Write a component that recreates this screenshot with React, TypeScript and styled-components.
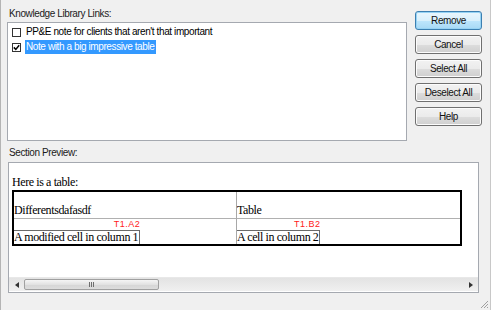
import React from "react";
import styled, { createGlobalStyle } from "styled-components";

const GlobalStyle = createGlobalStyle`
  html, body {
    margin: 0;
    padding: 0;
    background: #f0f0f0;
  }
`;

const uiFont = `"Liberation Sans", "Noto Sans", Arial, sans-serif`;
const docFont = `"Liberation Serif", "Times New Roman", serif`;

const Window = styled.div`
  width: 491px;
  height: 310px;
  box-sizing: border-box;
  background: #f0f0f0;
  border-left: 1px solid #b4b4b4;
  border-right: 1px solid #c8c8c8;
  padding: 6px 8px 0 6px;
  display: flex;
  flex-direction: column;
  position: relative;
  font-family: ${uiFont};
  font-size: 10px;
  letter-spacing: -0.4px;
  color: #000;
`;

const TopRow = styled.div`
  display: flex;
  gap: 8px;
`;

const ListColumn = styled.div`
  display: flex;
  flex-direction: column;
  width: 400px;
`;

const Label = styled.div`
  height: 16px;
  line-height: 16px;
  padding-left: 2px;
  color: #1a1a1a;
`;

const ListBox = styled.div`
  height: 119px;
  box-sizing: border-box;
  background: #fff;
  border: 1px solid #a5a9b0;
  padding: 2px 4px;
  display: flex;
  flex-direction: column;
  gap: 1px;
`;

const Item = styled.label`
  display: flex;
  align-items: center;
  gap: 3px;
  height: 14px;
`;

const Box = styled.span`
  width: 9px;
  height: 9px;
  box-sizing: border-box;
  border: 1px solid #333;
  background: #fff;
  display: flex;
  align-items: center;
  justify-content: center;
  margin-right: 1px;
`;

const ItemText = styled.span<{ $selected?: boolean }>`
  padding: 0 2px 0 1px;
  line-height: 14px;
  background: ${(p) => (p.$selected ? "#3399ff" : "transparent")};
  color: ${(p) => (p.$selected ? "#fff" : "#000")};
`;

const Buttons = styled.div`
  display: flex;
  flex-direction: column;
  gap: 5px;
  padding-top: 5px;
  width: 67px;
`;

const Button = styled.button<{ $primary?: boolean }>`
  height: 19px;
  padding: 0;
  border-radius: 3px;
  font-family: ${uiFont};
  font-size: 10px;
  letter-spacing: -0.4px;
  color: #111;
  border: 1px solid ${(p) => (p.$primary ? "#3c7fb1" : "#707070")};
  background: ${(p) =>
    p.$primary
      ? "linear-gradient(#eaf6fd 0%, #d9f0fc 50%, #bee6fd 51%, #a7d9f5 100%)"
      : "linear-gradient(#f2f2f2 0%, #ebebeb 50%, #dddddd 51%, #cfcfcf 100%)"};
  box-shadow: inset 0 0 0 1px ${(p) => (p.$primary ? "#97d3f4" : "#fcfcfc")};
`;

const PreviewLabel = styled(Label)`
  margin-top: 4px;
  margin-bottom: 1px;
`;

const Preview = styled.div`
  width: 471px;
  height: 131px;
  box-sizing: border-box;
  margin-left: 1px;
  background: #fff;
  border: 1px solid #a5a9b0;
  display: flex;
  flex-direction: column;
`;

const Doc = styled.div`
  flex: 1;
  padding: 12px 0 0 3px;
  font-family: ${docFont};
  font-size: 12px;
  letter-spacing: -0.4px;
  color: #000;
`;

const DocLine = styled.div`
  line-height: 14px;
  margin-bottom: 1px;
`;

const Table = styled.div`
  width: 450px;
  box-sizing: border-box;
  border: 2px solid #000;
  display: grid;
  grid-template-columns: 223px 1fr;
`;

const Cell = styled.div<{ $head?: boolean; $last?: boolean }>`
  border-right: ${(p) => (p.$last ? "none" : "1px solid #a8a8a8")};
  border-bottom: ${(p) => (p.$head ? "1px solid #b0b0b0" : "none")};
  height: ${(p) => (p.$head ? "27px" : "25px")};
  display: flex;
  align-items: flex-end;
  line-height: 14px;
  padding-bottom: ${(p) => (p.$head ? "1px" : "0")};
  box-sizing: border-box;
`;

const Marked = styled.div`
  display: inline-flex;
  flex-direction: column;
  align-items: flex-end;
`;

const Tag = styled.span`
  font-family: ${uiFont};
  font-size: 9px;
  letter-spacing: 0.5px;
  line-height: 10px;
  color: #ff2020;
  padding-bottom: 1px;
`;

const MarkedText = styled.span`
  border: 1px solid #6a6a6a;
  border-left: none;
  border-bottom: none;
  line-height: 13px;
  padding-right: 1px;
`;

const ScrollBar = styled.div`
  height: 13px;
  margin: 0 0 1px 0;
  background: linear-gradient(#e3e3e3, #f0f0f0);
  border-top: 1px solid #e8e8e8;
  display: flex;
  align-items: center;
`;

const Arrow = styled.div`
  width: 15px;
  height: 13px;
  display: flex;
  align-items: center;
  justify-content: center;
`;

const Track = styled.div`
  flex: 1;
  height: 13px;
  display: flex;
  align-items: center;
`;

const Thumb = styled.div`
  width: 135px;
  height: 11px;
  box-sizing: border-box;
  border: 1px solid #a0a0a0;
  border-radius: 2px;
  background: linear-gradient(#f5f5f5, #e2e2e2 50%, #d6d6d6 51%, #dcdcdc);
  display: flex;
  align-items: center;
  justify-content: center;
`;

const Grip = styled.div`
  display: flex;
  gap: 1px;
  span {
    width: 1px;
    height: 5px;
    background: #6e6e6e;
  }
`;

const SizeGrip = styled.svg`
  position: absolute;
  right: 1px;
  bottom: 1px;
`;

const CheckMark = () => (
  <svg width="7" height="7" viewBox="0 0 7 7">
    <path d="M0.8 3.4 L2.8 5.4 L6.2 1.2" fill="none" stroke="#000" strokeWidth="1.5" />
  </svg>
);

const App: React.FC = () => {
  return (
    <>
      <GlobalStyle />
      <Window>
        <TopRow>
          <ListColumn>
            <Label>Knowledge Library Links:</Label>
            <ListBox>
              <Item>
                <Box />
                <ItemText>PP&amp;E note for clients that aren't that important</ItemText>
              </Item>
              <Item>
                <Box>
                  <CheckMark />
                </Box>
                <ItemText $selected>Note with a big impressive table</ItemText>
              </Item>
            </ListBox>
          </ListColumn>
          <Buttons>
            <Button $primary>Remove</Button>
            <Button>Cancel</Button>
            <Button>Select All</Button>
            <Button>Deselect All</Button>
            <Button>Help</Button>
          </Buttons>
        </TopRow>
        <PreviewLabel>Section Preview:</PreviewLabel>
        <Preview>
          <Doc>
            <DocLine>Here is a table:</DocLine>
            <Table>
              <Cell $head>Differentsdafasdf</Cell>
              <Cell $head $last>Table</Cell>
              <Cell>
                <Marked>
                  <Tag>T1.A2</Tag>
                  <MarkedText>A modified cell in column 1</MarkedText>
                </Marked>
              </Cell>
              <Cell $last>
                <Marked>
                  <Tag>T1.B2</Tag>
                  <MarkedText>A cell in column 2</MarkedText>
                </Marked>
              </Cell>
            </Table>
          </Doc>
          <ScrollBar>
            <Arrow>
              <svg width="4" height="6" viewBox="0 0 4 6">
                <path d="M4 0 L0 3 L4 6 Z" fill="#333" />
              </svg>
            </Arrow>
            <Track>
              <Thumb>
                <Grip>
                  <span />
                  <span />
                  <span />
                </Grip>
              </Thumb>
            </Track>
            <Arrow>
              <svg width="4" height="6" viewBox="0 0 4 6">
                <path d="M0 0 L4 3 L0 6 Z" fill="#333" />
              </svg>
            </Arrow>
          </ScrollBar>
        </Preview>
        <SizeGrip width="10" height="10" viewBox="0 0 10 10">
          <path d="M9 2 L2 9 M9 5 L5 9 M9 8 L8 9" stroke="#a0a0a0" strokeWidth="1" />
        </SizeGrip>
      </Window>
    </>
  );
};

export default App;
